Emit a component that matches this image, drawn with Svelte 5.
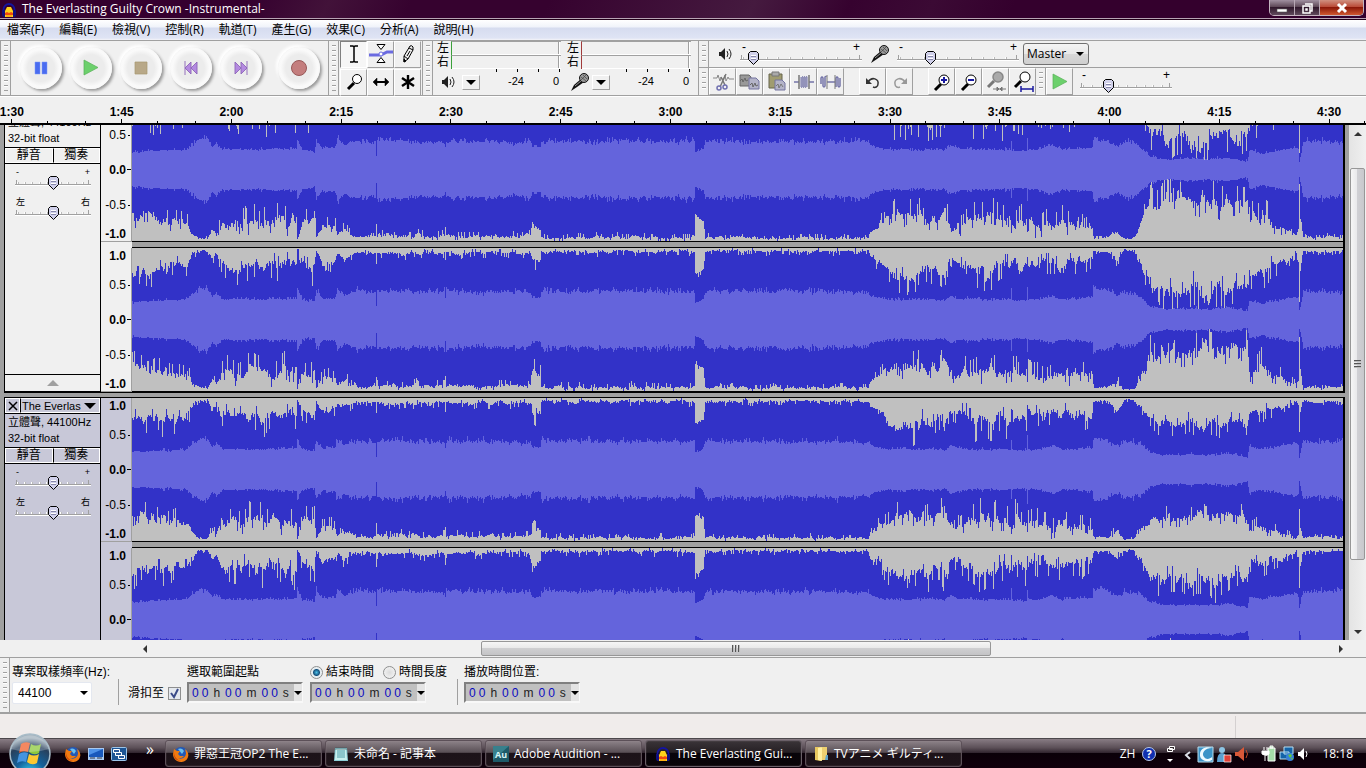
<script>
  const menus = ['檔案(F)', '編輯(E)', '檢視(V)', '控制(R)', '軌道(T)', '產生(G)', '效果(C)', '分析(A)', '說明(H)'];
  const times = ['1:30', '1:45', '2:00', '2:15', '2:30', '2:45', '3:00', '3:15', '3:30', '3:45', '4:00', '4:15', '4:30'];
  const levels = ['1.0', '0.5', '0.0', '-0.5', '-1.0'];
  const transport = ['pause', 'play', 'stop', 'rewind', 'forward', 'record'];
  const tools = ['select', 'envelope', 'draw', 'zoom', 'shift', 'multi'];

  // column, headroom, jitter, rms half height
  const envelope = [
    [0, 14, 24, 17], [25, 13, 24, 19], [55, 10, 18, 20], [60, 4, 8, 26], [68, 1, 4, 30], [75, 1, 4, 30],
    [80, 8, 10, 22], [84, 5, 8, 26], [90, 10, 22, 20], [120, 8, 28, 20], [164, 8, 28, 21], [165, 1, 3, 30],
    [170, 8, 20, 20], [182, 12, 26, 18], [184, 2, 4, 29], [190, 10, 16, 21], [203, 6, 16, 22], [205, 4, 4, 31],
    [212, 5, 14, 24], [224, 3, 4, 28], [243, 2, 6, 27], [244, 13, 10, 13], [245, 3, 8, 29], [300, 2, 9, 27],
    [312, 2, 9, 27], [313, 11, 10, 21], [314, 2, 8, 28], [398, 2, 8, 27], [400, 9, 20, 22], [408, 8, 16, 22],
    [409, 1, 7, 28], [562, 1, 7, 28], [563, 24, 6, 17], [571, 18, 8, 20], [573, 1, 6, 28], [736, 1, 6, 27],
    [738, 7, 6, 24], [753, 13, 18, 20], [765, 15, 26, 20], [775, 20, 30, 20], [790, 14, 26, 20], [808, 13, 24, 20],
    [812, 22, 26, 18], [818, 6, 16, 24], [825, 8, 20, 21], [845, 11, 30, 20], [878, 10, 28, 20], [879, 6, 8, 30],
    [880, 9, 26, 19], [894, 8, 28, 19], [895, 5, 8, 31], [896, 8, 26, 20], [905, 8, 26, 20], [920, 6, 22, 24],
    [930, 8, 26, 20], [960, 8, 18, 22], [961, 2, 4, 31], [975, 2, 4, 29], [985, 6, 12, 23], [992, 1, 4, 27],
    [1002, 1, 3, 27], [1010, 14, 14, 20], [1018, 28, 24, 13], [1036, 28, 40, 10], [1055, 30, 34, 11],
    [1078, 28, 42, 10], [1095, 26, 34, 12], [1115, 32, 26, 8], [1117, 10, 26, 19], [1130, 14, 30, 16],
    [1150, 8, 16, 20], [1164, 3, 8, 22], [1166, 10, 5, 20], [1167, 52, 10, 7], [1168, 22, 5, 12], [1170, 5, 5, 22],
    [1171, 2, 5, 28], [1211, 2, 5, 28]
  ];

  function drawWave(seed, loud) {
    let state = seed;
    const rand = () => {
      state = (state * 1103515245 + 12345) % 2147483648;
      return state / 2147483648;
    };
    // slow swell with single-column spikes on top of it
    const noise = () => {
      let from = rand();
      let to = rand();
      let step = 0;
      let length = 4;
      return () => {
        if (++step > length) {
          from = to;
          to = rand() ** 1.5;
          step = 1;
          length = 2 + Math.floor(rand() * 5);
        }
        const swell = from + ((to - from) * step) / length;
        const spike = rand();
        return swell * 0.5 + spike * 0.35 + (spike > 0.88 ? 0.4 : 0) - (spike < 0.08 ? 0.2 : 0);
      };
    };
    const upper = noise();
    const lower = noise();
    const body = noise();
    let k = 0;
    let peakTop = '', peakBottom = '', rmsTop = '', rmsBottom = '';
    for (let x = 0; x < 1211; x++) {
      while (envelope[k + 1][0] <= x) k++;
      const a = envelope[k];
      const b = envelope[k + 1];
      const t = (x - a[0]) / (b[0] - a[0]);
      const mix = i => a[i] + (b[i] - a[i]) * t;
      const scale = x > 1005 && x < 1171 ? loud : 1;
      const top = Math.max(0, Math.round((mix(1) + mix(2) * upper()) * scale));
      const bottom = Math.max(0, Math.round((mix(1) + mix(2) * lower()) * scale));
      const wobble = mix(3) > 25 ? 5 : 3;
      const rms = Math.round(mix(3) + (scale < 1 ? 4 : 0) + (body() - 0.5) * wobble + (wobble > 4 ? rand() * 3 - 1 : 0));
      peakTop += `V${top}H${x + 1}`;
      peakBottom = `V${143 - bottom}H${x}` + peakBottom;
      rmsTop += `V${71 - rms}H${x + 1}`;
      rmsBottom = `V${72 + rms}H${x}` + rmsBottom;
    }
    return {
      peak: `M0 71${peakTop}${peakBottom}Z`,
      rms: `M0 71${rmsTop}${rmsBottom}Z`
    };
  }

  const tracks = [
    { name: '', levels: ['', ...levels.slice(1)], selected: false, waves: [drawWave(11, 1), drawWave(29, 1)] },
    { name: 'The Everlas', levels, selected: true, waves: [drawWave(47, 0.6), drawWave(83, 0.75)] }
  ];

  const tasks = [
    { icon: 'fox', text: '罪惡王冠OP2 The E...' },
    { icon: 'note', text: '未命名 - 記事本' },
    { icon: 'au', text: 'Adobe Audition - ...' },
    { icon: 'audacity', text: 'The Everlasting Gui...', active: true },
    { icon: 'folder', text: 'TVアニメ ギルティ...' }
  ];

  let rate = $state('44100');
  let snap = $state(true);
  let endMode = $state('end');
</script>

{#snippet appIcon(name)}
  <svg class="app-icon" viewBox="0 0 16 16" aria-hidden="true">
    {#if name === 'audacity'}
      <path d="M2.500 12V7.500a5.500 5.500 0 0 1 11 0V12" fill="none" stroke="#1414a0" stroke-width="1.800" />
      <path d="M1 8h3v7H2l-1-2zM15 8h-3v7h2l1-2z" fill="#10107c" />
      <path d="M6 5h4l2 4v6H4V9z" fill="#ffd21c" />
      <path d="M4 11l2-1 2 1 2-1 2 1v2H4z" fill="#f04a10" />
      <path d="M5 13h6v2H5z" fill="#ffb010" />
    {:else if name === 'fox'}
      <circle cx="8" cy="8" r="7" fill="#2458b4" />
      <path d="M5 3a5 5 0 0 1 6 2L9 8z" fill="#6ac0ee" />
      <path d="M1 3l3 2 3 0-2 3 2 2 4 0C9 13 5 12 5 12c4 2 8-1 8-5l-1-4c3 2 4 6 3 8-1 4-5 5-7 5-5 0-8-4-8-8z" fill="#f07a10" />
      <path d="M1 6c0 5 3 8 7 9-5 0-8-4-7-9z" fill="#c83c08" />
    {:else if name === 'note'}
      <path d="M2 2h12l1 13H1z" fill="#8ed0d8" />
      <path d="M3 3h10l1 11H2z" fill="#c8f0ee" />
      <path d="M4 5h8M4 7h8M4 9h8M4 11h8" stroke="#4e9ca8" />
      <path d="M3 1v3M5 1v3M7 1v3M9 1v3M11 1v3M13 1v3" stroke="#40585c" stroke-width=".7" />
    {:else if name === 'au'}
      <rect width="16" height="16" fill="#1e5a68" />
      <path d="M0 0h16L0 14z" fill="#38808c" />
      <text x="8" y="12" text-anchor="middle" font-size="9" font-weight="bold" fill="#d6f4f6">Au</text>
    {:else if name === 'folder'}
      <path d="M2 1h6v14l-6-1z" fill="#e8c860" />
      <path d="M5 2l4-1v14l-4-1z" fill="#fff0a0" />
      <path d="M9 1h5v13H9z" fill="#edd070" />
      <path d="M13 9h2v5h-3z" fill="#60a4c8" />
    {:else if name === 'desktop'}
      <rect x="0" y="2" width="16" height="12" fill="#a8c8f0" />
      <path d="M1 3h14v8H1z" fill="#1858bc" />
      <path d="M1 3h14L1 9z" fill="#4e92e8" />
      <path d="M2 12h5M9 12h5" stroke="#303848" />
    {:else if name === 'windows'}
      <rect x=".5" y="1.500" width="15" height="13" rx="1" fill="#1c5494" stroke="#9cc4e8" />
      <path d="M2.500 3.500h6v3h-6zM4.500 6.500h6v3h-6zM7.500 9.500h6v3h-6z" fill="#2c5c9c" stroke="#fff" />
    {/if}
  </svg>
{/snippet}

{#snippet transportIcon(name)}
  <svg width="18" height="18" viewBox="0 0 18 18" aria-hidden="true">
    {#if name === 'pause'}
      <path d="M3 3h5v12H3zM10 3h5v12h-5z" fill="#4a6cf0" stroke="#7c9af8" stroke-width=".5" />
    {:else if name === 'play'}
      <path d="M2 1v15l14-7.500z" fill="#6cd06c" stroke="#58b058" stroke-width=".7" />
    {:else if name === 'stop'}
      <path d="M3 3h12v12H3z" fill="#b8a888" stroke="#a89870" stroke-width=".7" />
    {:else if name === 'rewind'}
      <path d="M3 2v14M9 3v12l-6-6zM15 3v12L9 9z" fill="#b48ae0" stroke="#8c64b8" stroke-width=".9" />
    {:else if name === 'forward'}
      <path d="M15 2v14M9 3v12l6-6zM3 3v12l6-6z" fill="#b48ae0" stroke="#8c64b8" stroke-width=".9" />
    {:else}
      <circle cx="9" cy="9" r="7.500" fill="#c47e7e" stroke="#985858" />
    {/if}
  </svg>
{/snippet}

{#snippet toolIcon(name)}
  <svg width="24" height="24" viewBox="0 0 24 24" fill="none" stroke="#000" stroke-width="1.500" aria-hidden="true">
    {#if name === 'select'}
      <path d="M8 4h3l1 1 1-1h3M12 5v14M8 20h3l1-1 1 1h3" />
    {:else if name === 'envelope'}
      <path d="M0 13h12l6-3h6" stroke="#6a6ae0" stroke-width="3" />
      <path d="M8 2.500h8l-4 5zM8 20.500h8l-4-5z" fill="#fff" stroke-width="1" />
      <circle cx="12" cy="12" r="2" fill="#fff" stroke="#6a6ae0" stroke-width="1" />
    {:else if name === 'draw'}
      <path d="M8 14l6-10q2-1 3 1v3l-5 9-4 3zM8 14l4 3M13 6l4 2M14 9l-3 5" stroke-width="1" />
      <path d="M8 17v3l2-1z" fill="#000" stroke-width="1" />
    {:else if name === 'shift'}
      <path d="M5 12h14" stroke-width="2" />
      <path d="M8 8l-4 4 4 4zM16 8l4 4-4 4z" fill="#000" stroke-width=".5" />
    {:else if name === 'multi'}
      <path d="M12 5v14M6 8l12 8M18 8L6 16" stroke-width="2.400" />
    {:else if name === 'zoom'}
      <path d="M12 13l-6 6" stroke-width="3" />
      <circle cx="15" cy="9" r="4.500" fill="#fff" stroke-width="1" />
    {:else if name === 'cut'}
      <path d="M2 8h4l1-3 2 6 1-4 2 3 2-5 1 6 2-4 1 2h5" stroke="#888" stroke-width="1" />
      <path d="M15 4l-6 13M10 7l4 8" stroke="#777" />
      <circle cx="8" cy="18" r="2" stroke="#7070b0" /><circle cx="14" cy="17" r="2" stroke="#7070b0" />
    {:else if name === 'copy'}
      <path d="M2 5h9l2 2v9H2z" fill="#999" stroke="#666" stroke-width="1" />
      <path d="M11 8h7l3 3v8H11z" fill="#b4b4c8" stroke="#7474a0" stroke-width="1" />
      <path d="M2 11l2-2 1 3 2-4 1 3 2-1M12 15l2-2 1 4 2-4 1 3 2-1" stroke="#666" stroke-width="1" />
    {:else if name === 'paste'}
      <path d="M4 4h13v14H4z" fill="#a09c70" stroke="#66644c" stroke-width="1" />
      <path d="M7 2h7v4H7z" fill="#aaa" stroke="#777" stroke-width="1" />
      <path d="M10 10h7l3 3v7H10z" fill="#b4b4c8" stroke="#7474a0" stroke-width="1" />
      <path d="M11 16l2-2 1 4 2-4 2 3" stroke="#777" stroke-width="1" />
    {:else if name === 'trim'}
      <path d="M2 12h5M17 12h5" stroke="#7474a8" />
      <path d="M7 5v14M17 5v14" stroke="#777" />
      <path d="M9 7v10q1 1 1 0V7q1-1 1 0v10q1 1 1 0V7q1-1 1 0v10q1 1 1 0V7q1-1 1 0v10" stroke="#7474a8" stroke-width="1" />
    {:else if name === 'silence'}
      <path d="M2 14V8q1-2 2 0v8q1 2 2 0V7q1-1 1 0M8 12h8M17 17V8q1-2 2 0v8q1 2 2 0V8" stroke="#7474a8" />
      <path d="M8 5v14M16 5v14" stroke="#777" stroke-width="1" />
    {:else if name === 'undo'}
      <path d="M7 12c4-6 11-3 10 2 0 3-3 4-5 3" stroke="#333" />
      <path d="M5 8v6h6z" fill="#333" stroke="none" />
    {:else if name === 'redo'}
      <path d="M17 12c-4-6-11-3-10 2 0 3 3 4 5 3" stroke="#999" />
      <path d="M19 8v6h-6z" fill="#999" stroke="none" />
    {:else if name === 'zoomin' || name === 'zoomout'}
      <path d="M11 14l-6 6" stroke-width="3" />
      <circle cx="14" cy="10" r="5" fill="#fff" stroke-width="1" />
      <path d={name === 'zoomin' ? 'M11 10h6M14 7v6' : 'M11 10h6'} stroke="#1818a0" stroke-width="2" />
    {:else if name === 'zoomsel'}
      <path d="M10 11l-6 6" stroke="#777" stroke-width="3" />
      <circle cx="14" cy="7" r="5" fill="#aaa" stroke="#888" />
      <path d="M9 19h13M13 17l2 2-2 2zM18 17l-2 2 2 2z" fill="#777" stroke="#777" stroke-width="1" />
    {:else if name === 'zoomfit'}
      <path d="M10 11l-6 6" stroke-width="3" />
      <circle cx="14" cy="7" r="5" fill="#fff" stroke-width="1" />
      <path d="M10 19h12M10 16v6M22 16v6" stroke="#1818a0" />
    {/if}
  </svg>
{/snippet}

{#snippet speaker()}
  <svg width="16" height="16" viewBox="0 0 16 16" aria-hidden="true">
    <path d="M2 6h2l4-4v12l-4-4H2z" fill="#222" />
    <path d="M10 5q2 3 0 6M12 3q4 5 0 10" fill="none" stroke="#222" />
  </svg>
{/snippet}

{#snippet mic()}
  <svg width="20" height="20" viewBox="0 0 20 20" aria-hidden="true">
    <path d="M1 19l3-6 7-6 3 3-7 5z" fill="#111" />
    <path d="M5 14l6-5" stroke="#999" />
    <circle cx="14" cy="6" r="4.500" fill="#999" stroke="#111" />
    <path d="M11 5l5 4M13 3l4 4M11 8l5-5" stroke="#444" stroke-width=".7" />
  </svg>
{/snippet}

{#snippet slider(label, value, low, high, size)}
  <label class="slider {size}">
    <span class="ends"><span>{low}</span><span>{high}</span></span>
    <input type="range" min="0" max="100" {value} aria-label={label} />
  </label>
{/snippet}

{#snippet meter(color)}
  <div class="meter">
    <div class="bars {color}">
      <span>左</span><div class="bar"></div>
      <span>右</span><div class="bar"></div>
    </div>
    <div class="meter-foot">
      <span class="source">{#if color === 'green'}{@render speaker()}{:else}{@render mic()}{/if}</span>
      <button class="drop" aria-label="Meter options"><i class="tri"></i></button>
      <div class="scale"><span>-24</span><span>0</span></div>
    </div>
  </div>
{/snippet}

{#snippet timeBox(label)}
  <div class="time" role="group" aria-label={label}>
    <span><b>0</b><b>0</b></span> h <span><b>0</b><b>0</b></span> m <span><b>0</b><b>0</b></span> s
    <button aria-label="Time format"><i class="tri"></i></button>
  </div>
{/snippet}

<div class="window">
  <header class="titlebar">
    {@render appIcon('audacity')}
    <h1>The Everlasting Guilty Crown -Instrumental-</h1>
    <div class="controls">
      <button aria-label="Minimize"><svg width="12" height="12" viewBox="0 0 12 12"><path d="M1 7h10v3H1z" fill="#fff" stroke="#555" stroke-width=".6" /></svg></button>
      <button aria-label="Restore"><svg width="12" height="12" viewBox="0 0 12 12"><path d="M4 2h7v7H9M2 4h7v7H2zM5 7h1v1H5z" fill="none" stroke="#fff" stroke-width="1.500" /></svg></button>
      <button class="close" aria-label="Close"><svg width="12" height="12" viewBox="0 0 12 12"><path d="M2 2l8 8M10 2l-8 8" stroke="#fff" stroke-width="3" /></svg></button>
    </div>
  </header>

  <nav class="menubar">
    {#each menus as item}<button>{item}</button>{/each}
  </nav>

  <div class="toolbars">
    <div class="toolbar transport">
      <i class="grip"></i>
      {#each transport as name}
        <button class={name} aria-label={name}>{@render transportIcon(name)}</button>
      {/each}
    </div>
    <div class="toolbar">
      <i class="grip"></i>
      <div class="tools">
        {#each tools as name, i}
          <button class="tile" class:pressed={i === 0} aria-label={name}>{@render toolIcon(name)}</button>
        {/each}
      </div>
    </div>
    <div class="toolbar meters">
      <i class="grip"></i>
      {@render meter('green')}
      {@render meter('red')}
    </div>
    <div class="stack">
      <div class="toolbar mixer">
        <i class="grip"></i>
        {@render speaker()}
        {@render slider('Output volume', 7, '-', '+', 'wide')}
        {@render mic()}
        {@render slider('Input volume', 25, '-', '+', 'wide')}
        <select aria-label="Input source"><option>Master</option></select>
      </div>
      <div class="toolbar edit">
        <i class="grip"></i>
        {#each ['cut', 'copy', 'paste', 'trim', 'silence'] as name}
          <button class="tile" aria-label={name}>{@render toolIcon(name)}</button>
        {/each}
        <i class="gap"></i>
        {#each ['undo', 'redo'] as name}
          <button class="tile" aria-label={name}>{@render toolIcon(name)}</button>
        {/each}
        <i class="gap"></i>
        {#each ['zoomin', 'zoomout', 'zoomsel', 'zoomfit'] as name}
          <button class="tile" aria-label={name}>{@render toolIcon(name)}</button>
        {/each}
        <i class="grip"></i>
        <button class="tile" aria-label="Play at speed">{@render transportIcon('play')}</button>
        {@render slider('Playback speed', 29, '-', '+', 'mid')}
      </div>
    </div>
  </div>

  <div class="ruler">
    {#each times as time}<span>{time}</span>{/each}
  </div>

  <main class="workspace">
    <div class="viewport">
      {#each tracks as track}
        <section class="track" class:selected={track.selected}>
          <div class="panel">
            <div class="name">
              <button aria-label="Close track">
                <svg width="10" height="10" viewBox="0 0 10 10"><path d="M1 1l8 8M9 1L1 9" stroke="#000" stroke-width="1.500" /></svg>
              </button>
              <button class="title" aria-label="Track menu">{track.name}<i class="tri"></i></button>
            </div>
            <p>立體聲, 44100Hz<br />32-bit float</p>
            <div class="mute"><button>靜音</button><button>獨奏</button></div>
            <div class="knobs">
              {@render slider('Gain', 50, '-', '+', 'small')}
              {@render slider('Pan', 50, '左', '右', 'small')}
            </div>
            <button class="collapse" aria-label="Collapse"><i></i></button>
          </div>
          <div class="channels">
            {#each track.waves as wave, i}
              <div class="channel">
                <div class="levels">
                  {#each i ? levels : track.levels as level}<span class:strong={!level.includes('0.5')}>{level}</span>{/each}
                </div>
                <svg viewBox="0 0 1211 143" preserveAspectRatio="none" shape-rendering="crispEdges" aria-hidden="true">
                  <path d={wave.peak} fill="#3232c8" />
                  <path d={wave.rms} fill="#6464dc" />
                </svg>
              </div>
            {/each}
          </div>
        </section>
      {/each}
    </div>
    <div class="vscroll">
      <button aria-label="Scroll up"><i class="up"></i></button>
      <div class="thumb"><i></i></div>
      <button aria-label="Scroll down"><i class="down"></i></button>
    </div>
  </main>

  <div class="hscroll">
    <button aria-label="Scroll left"><i class="left"></i></button>
    <div class="thumb"><i></i></div>
    <button aria-label="Scroll right"><i class="right"></i></button>
  </div>

  <div class="selection">
    <i class="grip"></i>
    <div class="field rate">
      <label for="rate">專案取樣頻率(Hz):</label>
      <select id="rate" bind:value={rate}><option>44100</option><option>48000</option></select>
    </div>
    <i class="rule"></i>
    <label class="snap">滑扣至<input type="checkbox" bind:checked={snap} /></label>
    <div class="field">
      <span>選取範圍起點</span>
      {@render timeBox('選取範圍起點')}
    </div>
    <div class="field">
      <div class="radios">
        <label><input type="radio" value="end" bind:group={endMode} />結束時間</label>
        <label><input type="radio" value="length" bind:group={endMode} />時間長度</label>
      </div>
      {@render timeBox('結束時間')}
    </div>
    <i class="rule last"></i>
    <div class="field">
      <span>播放時間位置:</span>
      {@render timeBox('播放時間位置')}
    </div>
  </div>

  <div class="status"><span></span><span></span></div>

  <footer class="taskbar">
    <button class="start" aria-label="Start">
      <svg width="46" height="46" viewBox="0 0 46 46">
        <defs>
          <radialGradient id="orb" cx=".5" cy="1" r=".9">
            <stop offset="0" stop-color="#38d8f4" /><stop offset=".4" stop-color="#14629c" />
            <stop offset=".8" stop-color="#28405c" /><stop offset="1" stop-color="#a0b0bc" />
          </radialGradient>
        </defs>
        <circle cx="23" cy="23" r="20" fill="url(#orb)" stroke="#a8bcc8" stroke-width="1.500" />
        <path d="M14 13q4-3 9-1l-2 9q-5-2-9 1z" fill="#f0602c" />
        <path d="M24 13q5 3 10 0l-2 9q-5 3-10-1z" fill="#8cc83c" />
        <path d="M12 23q4-3 9-1l-2 9q-5-2-9 1z" fill="#4494e0" />
        <path d="M22 23q5 3 10 0l-2 9q-5 3-10-1z" fill="#fcc830" />
        <path d="M4 18a20 20 0 0 1 38 0Q23 24 4 18z" fill="#fff" opacity=".25" />
      </svg>
    </button>
    <div class="quick">
      {@render appIcon('fox')}{@render appIcon('desktop')}{@render appIcon('windows')}
      <span>»</span>
    </div>
    <div class="tasks">
      {#each tasks as task}
        <button class:active={task.active}>{@render appIcon(task.icon)}<span>{task.text}</span></button>
      {/each}
    </div>
    <div class="tray">
      <span>ZH</span>
      <svg width="115" height="20" viewBox="0 0 115 20" aria-hidden="true">
        <circle cx="9" cy="10" r="6.500" fill="#1030b0" stroke="#b8c8e8" />
        <text x="9" y="14" text-anchor="middle" font-size="11" font-weight="bold" fill="#fff">?</text>
        <path d="M29.500 2.500h5v3h-5zM27.500 4.500h5v3h-5z" fill="#332c30" stroke="#fff" />
        <path d="M27 15h6l-3 3z" fill="#fff" />
        <path d="M50 8l-4 3 4 4" fill="none" stroke="#dce0e8" stroke-width="2" />
        <path d="M58 3h15v15H58z" fill="#3c94c8" stroke="#b8dcec" />
        <path d="M72 4c-7 0-11 5-8 9 2 3 6 2 8 0l0 3c-5 3-13 0-12-6 0-5 6-8 12-6z" fill="#eefaff" />
        <circle cx="82" cy="6" r="3" fill="#8cc4e4" />
        <path d="M77 18q0-9 5-9t5 9z" fill="#5ca0d0" />
        <path d="M84 11h7v7h-7z" fill="#e04038" stroke="#fff" stroke-width=".7" />
        <path d="M95 8h3l6-5v14l-6-5h-3z" fill="#d85838" />
        <path d="M106 6q3 4 0 8" fill="none" stroke="#c04828" />
      </svg>
      <svg width="52" height="20" viewBox="0 0 52 20" aria-hidden="true">
        <path d="M8 4h7v13H8zM10 2h3v2h-3z" fill="#a4dca8" stroke="#fff" />
        <path d="M2 7h7v3q-3 3-7 0zM4 3v3M7 3v3M5 12v5" fill="#fff" stroke="#fff" />
        <path d="M24 3h9v7h-9zM20 8h9v7h-9z" fill="#1464a8" stroke="#b8e0f4" />
        <circle cx="30" cy="13" r="4" fill="#3880d8" />
        <path d="M28 11l3-1 1 2-2 2zM31 14l2 0-1 2z" fill="#64c83c" />
        <path d="M38 8h2l4-4v12l-4-4h-2z" fill="#fff" />
        <path d="M46 7q2 3 0 6" fill="none" stroke="#fff" />
      </svg>
      <time>18:18</time>
    </div>
  </footer>
</div>

<style>
  :global(body) {
    background: #f0f0f0;
  }

  .window {
    display: flex;
    flex-direction: column;
    height: 100vh;
    overflow: hidden;
    font: 12px/16px "Open Sans", "Noto Sans CJK TC", sans-serif;
    color: #000;
    background: #f0f0f0;
  }

  .window :is(button, input, select) {
    margin: 0;
    font: inherit;
    color: inherit;
    box-sizing: border-box;
  }

  button {
    padding: 0;
    border: 0;
    background: none;
  }

  svg {
    flex: none;
    display: block;
  }

  .app-icon {
    width: 16px;
    height: 16px;
  }

  .tri {
    display: block;
    border: 5px solid transparent;
    border-top-color: #000;
    border-bottom: 0;
  }

  .titlebar {
    display: flex;
    align-items: center;
    height: 18px;
    border-bottom: 1px solid #b8a4b4;
    background: linear-gradient(115deg, #35002f 18%, #421239 24%, #36022f 30%, #36022f 40%, #451a3f 55%, #36022f 62%, #3b0a34 68%, #34002d 74%);
    color: #fff;
  }

  .titlebar .app-icon {
    margin: 2px 5px 0 1px;
  }

  h1 {
    flex: 1;
    margin: 0;
    font-size: 12px;
    font-weight: 400;
  }

  .controls {
    display: flex;
    align-self: flex-start;
    margin-right: 2px;
    border: 1px solid #c4b4c0;
    border-top: 0;
    border-radius: 0 0 5px 5px;
    overflow: hidden;
  }

  .controls button {
    display: grid;
    place-items: center;
    width: 25px;
    height: 15px;
    border-right: 1px solid #b8a8b4;
    background: linear-gradient(#a090a0, #56404f 50%, #30182c 50%, #604a5c);
  }

  .controls .close {
    width: 43px;
    border: 0;
    background: linear-gradient(#d09080, #b84430 50%, #8c1808 50%, #d05830);
  }

  .menubar {
    display: flex;
    height: 20px;
    border-top: 1px solid #200018;
    background: linear-gradient(#fff, #f0f3fa 35%, #d6dcef 40%, #dfe4f4 90%, #f4f4f8);
  }

  .menubar button {
    padding: 0 8px 0 7px;
  }

  .toolbars {
    display: flex;
    height: 57px;
    border-bottom: 1px solid #fff;
    box-sizing: border-box;
    background: #f0f0f0;
  }

  .toolbar {
    display: flex;
    align-items: center;
    border: 1px solid #a0a0a0;
    border-width: 1px 0 1px 1px;
  }

  .grip {
    align-self: stretch;
    flex: none;
    width: 9px;
    border-right: 1px solid #a0a0a0;
    background: repeating-linear-gradient(#a0a0a0 0 1px, #fff 1px 2px, transparent 2px 5px) 3px 4px / 4px calc(100% - 8px) no-repeat;
  }

  .transport {
    padding-right: 4px;
  }

  .transport button {
    display: grid;
    place-items: center;
    width: 42px;
    height: 42px;
    margin: 0 4px;
    border-radius: 50%;
    background: radial-gradient(#ececec 45%, #fafafa 62%, #f4f4f4);
    box-shadow: 2px 2px 3px #999, -2px -2px 3px #fff;
  }

  .transport .pause {
    margin-left: 9px;
  }

  .transport .record {
    margin-left: 12px;
  }

  .tools {
    display: grid;
    grid-template-columns: repeat(3, 27px);
    row-gap: 1px;
    padding: 0 1px;
  }

  .tile {
    display: grid;
    place-items: center;
    width: 27px;
    height: 27px;
    border: 1px solid;
    border-color: #fff #a0a0a0 #a0a0a0 #fff;
  }

  .tile.pressed {
    border-color: #808080 #fff #fff #808080;
    background: #f6f6f6;
  }

  .meters {
    gap: 4px;
    padding-right: 5px;
  }

  .meter {
    width: 126px;
    font-family: "Liberation Sans", "Noto Sans CJK TC", sans-serif;
  }

  .bars {
    display: grid;
    grid-template-columns: 13px 1fr;
    grid-auto-rows: 14px;
    column-gap: 1px;
    line-height: 14px;
  }

  .bar {
    margin-right: 2px;
    border: 1px solid #a0a0a0;
    border-width: 1px 0 0 1px;
    background: linear-gradient(90deg, #a0a0a0 50%, #fff 50%) right 1px top / 2px 100% no-repeat;
    box-shadow: inset 0 -1px #fff;
  }

  .green .bar {
    border-left-color: #3aa03a;
  }

  .red .bar {
    border-left-color: #a03a3a;
  }

  .meter-foot {
    display: flex;
    align-items: center;
    height: 26px;
    padding-left: 3px;
  }

  .source {
    width: 20px;
  }

  .meter-foot .drop {
    display: grid;
    place-items: center;
    width: 18px;
    height: 15px;
    margin-left: 2px;
    border: 1px solid;
    border-color: #fff #a0a0a0 #a0a0a0 #fff;
  }

  .scale {
    display: flex;
    flex: 1;
    align-self: stretch;
    justify-content: space-between;
    padding: 4px 4px 0 28px;
    font-size: 11px;
    background: repeating-linear-gradient(90deg, #000 0 1px, transparent 1px 21px) right 3px top / 85px 3px no-repeat;
  }

  .stack {
    display: flex;
    flex: 1;
    flex-direction: column;
  }

  .stack .toolbar {
    height: 27px;
  }

  .stack .edit {
    border-top: 0;
  }

  .mixer svg {
    margin-left: 8px;
  }

  .mixer select {
    appearance: none;
    width: 66px;
    height: 22px;
    margin-left: 4px;
    padding: 0 3px;
    border: 1px solid #707070;
    border-radius: 3px;
    background:
      url("data:image/svg+xml,%3Csvg xmlns='http://www.w3.org/2000/svg' width='8' height='4'%3E%3Cpath d='M0 0h8L4 4z'/%3E%3C/svg%3E") right 4px center no-repeat,
      linear-gradient(#f4f4f4, #e8e8e8 50%, #d8d8d8 50%, #cfcfcf);
  }

  .gap {
    width: 15px;
  }

  .slider {
    display: flex;
    flex-direction: column;
    width: 122px;
    margin-left: 7px;
    font-family: "Liberation Sans", "Noto Sans CJK TC", sans-serif;
  }

  .slider.mid {
    width: 92px;
  }

  .slider.small {
    width: 76px;
    margin: 0;
  }

  .ends {
    display: flex;
    justify-content: space-between;
    padding: 0 2px;
    line-height: 8px;
  }

  .small .ends {
    padding: 0 1px;
    font-size: 9px;
  }

  .slider input {
    appearance: none;
    width: 100%;
    height: 14px;
    background:
      linear-gradient(#a0a0a0, #a0a0a0) 0 8px / 100% 1px no-repeat,
      linear-gradient(#fff, #fff) 0 9px / 100% 1px no-repeat,
      linear-gradient(#a0a0a0, #a0a0a0) 1px 4px / 1px 4px no-repeat,
      linear-gradient(#a0a0a0, #a0a0a0) calc(100% - 2px) 4px / 1px 4px no-repeat,
      repeating-linear-gradient(90deg, #fff 0 1px, #bbb 1px 2px, transparent 2px 10%) 2px 6px / calc(100% - 4px) 2px no-repeat;
  }

  .slider input::-webkit-slider-thumb {
    appearance: none;
    width: 11px;
    height: 14px;
    background: url("data:image/svg+xml,%3Csvg xmlns='http://www.w3.org/2000/svg' width='11' height='14'%3E%3Cpath d='M2.500.5h6l2 2v6l-5 5-5-5v-6z' fill='%23d0d0ea' stroke='%23000'/%3E%3Cpath d='M3 4.500h5M3 7.500h5' stroke='%23fff'/%3E%3Cpath d='M3 5.500h5M3 8.500h5' stroke='%238888aa'/%3E%3C/svg%3E");
  }

  .ruler {
    display: flex;
    height: 26px;
    border-bottom: 2px solid #000;
    overflow: hidden;
    font: bold 12px/30px "Liberation Sans", sans-serif;
    text-align: center;
  }

  .ruler span {
    flex: 1;
    background:
      linear-gradient(#000, #000) 50% 100% / 1px 4px no-repeat,
      linear-gradient(#000, #000) 17% 100% / 1px 2px no-repeat,
      linear-gradient(#000, #000) 83% 100% / 1px 2px no-repeat;
  }

  .ruler span:first-child {
    margin-left: -43px;
  }

  .ruler span:last-child {
    margin-right: -18px;
  }

  .workspace {
    display: flex;
    flex: 1;
    min-height: 0;
  }

  /* scrolled a little way into the first track */
  .viewport {
    flex: 1;
    min-width: 0;
    padding: 0 4px;
    overflow: hidden;
    background: #a0a0a0;
  }

  .track {
    display: flex;
    height: 293px;
    margin-bottom: 4px;
    border: 1px solid #000;
    border-width: 1px 2px 2px 1px;
    background: #f0f0f0;
  }

  .track:first-child {
    margin-top: -28px;
  }

  .selected {
    background: #c8c8d8;
  }

  .panel {
    display: flex;
    flex-direction: column;
    width: 95px;
    border-right: 1px solid #000;
    font: 11px/16px "Liberation Sans", "Noto Sans CJK TC", sans-serif;
  }

  .name,
  .mute {
    display: flex;
    height: 15px;
    border-bottom: 1px solid #000;
  }

  .name button {
    display: grid;
    place-items: center;
    width: 15px;
    border: 1px solid #fff;
  }

  .name .title {
    display: flex;
    flex: 1;
    justify-content: space-between;
    padding: 0 3px 0 1px;
    border-left-color: #000;
  }

  .title .tri {
    border-width: 6px;
    border-bottom: 0;
  }

  .panel p {
    height: 33px;
    margin: 0;
    padding-left: 3px;
    border-bottom: 1px solid #000;
    white-space: nowrap;
  }

  .mute button {
    flex: 1;
    border: 1px solid #fff;
    font-size: 12px;
    line-height: 13px;
  }

  .mute button + button {
    border-left-color: #000;
  }

  .knobs {
    display: flex;
    flex: 1;
    flex-direction: column;
    gap: 8px;
    padding: 4px 0 0 10px;
  }

  .collapse {
    display: grid;
    place-items: center;
    height: 17px;
    border-top: 1px solid #000;
  }

  .collapse i {
    border: 6px solid transparent;
    border-top: 0;
    border-bottom-color: #a0a0a0;
  }

  .channels {
    display: flex;
    flex: 1;
    flex-direction: column;
    justify-content: space-between;
    min-width: 0;
    background: linear-gradient(#000 1px, #a0a0a0 1px 6px, #000 6px) 31px 143px / 100% 7px no-repeat;
  }

  .channel {
    display: flex;
    height: 143px;
  }

  .channel svg {
    flex: 1;
    width: 0;
    height: 143px;
    background: #c0c0c0;
  }

  .levels {
    display: grid;
    grid-template-rows: 16px 42px 27px 44px 14px;
    align-items: center;
    width: 30px;
    border-right: 1px solid #a0a0a0;
    box-shadow: 0 1px #a0a0a0;
    font: 12px/14px "Liberation Sans", sans-serif;
    text-align: right;
  }

  .levels span {
    padding-right: 5px;
    background: linear-gradient(#000, #000) right 1px center / 2px 1px no-repeat;
  }

  .levels .strong {
    font-weight: bold;
    background: none;
  }

  .levels span:nth-child(3) {
    background: linear-gradient(#000, #000) right center / 4px 1px no-repeat;
  }

  .vscroll {
    display: flex;
    flex-direction: column;
    width: 17px;
    background: linear-gradient(90deg, #e4e4e4, #f0f0f0);
  }

  .vscroll button,
  .hscroll button {
    display: grid;
    place-items: center;
    width: 17px;
    height: 17px;
  }

  .up,
  .down,
  .left,
  .right {
    border: 4px solid transparent;
  }

  .up {
    border-top: 0;
    border-bottom-color: #333;
  }

  .down {
    border-bottom: 0;
    border-top-color: #333;
  }

  .left {
    border-left: 0;
    border-right-color: #333;
  }

  .right {
    border-right: 0;
    border-left-color: #333;
  }

  .thumb {
    display: grid;
    place-items: center;
    border: 1px solid #979797;
    border-radius: 2px;
  }

  .vscroll .thumb {
    flex: 391;
    margin: 26px 1px 0;
    background: linear-gradient(90deg, #f6f6f6, #e8e8ea 50%, #d0d0d4 50%, #c8c8cc);
  }

  .vscroll button:last-child {
    flex: 74;
    align-items: end;
    padding-bottom: 6px;
  }

  .vscroll .thumb i {
    width: 7px;
    height: 8px;
    background: repeating-linear-gradient(#555 0 1px, #bbb 1px 2px, transparent 2px 3px);
  }

  .hscroll {
    display: flex;
    align-items: center;
    height: 17px;
    padding: 0 17px 0 136px;
    border-bottom: 1px solid #a0a0a0;
    background: #f0f0f0;
  }

  .hscroll .thumb {
    flex: 506;
    height: 13px;
    margin-left: 27%;
    background: linear-gradient(#f6f6f6, #e8e8e8 50%, #cfcfd1 50%, #c4c4c6);
  }

  .hscroll .thumb i {
    width: 8px;
    height: 7px;
    background: repeating-linear-gradient(90deg, #555 0 1px, #bbb 1px 2px, transparent 2px 3px);
  }

  .hscroll button:last-child {
    flex: 350;
    justify-items: end;
    padding-right: 6px;
  }

  .selection {
    display: flex;
    height: 54px;
    border-bottom: 2px solid #a0a0a0;
    font-family: "Liberation Sans", "Noto Sans CJK TC", sans-serif;
  }

  .field {
    display: flex;
    flex-direction: column;
    gap: 2px;
    margin-right: 7px;
    padding-top: 6px;
    white-space: nowrap;
  }

  .rate {
    width: 99px;
    margin-left: 2px;
  }

  .rate select {
    appearance: none;
    width: 80px;
    height: 22px;
    padding: 0 5px;
    border: 1px solid #e4e8f0;
    border-radius: 2px;
    background: #fff url("data:image/svg+xml,%3Csvg xmlns='http://www.w3.org/2000/svg' width='8' height='4'%3E%3Cpath d='M0 0h8L4 4z'/%3E%3C/svg%3E") right 3px center no-repeat;
  }

  .rule {
    align-self: flex-end;
    width: 1px;
    height: 26px;
    margin: 0 9px 7px 0;
    background: #a0a0a0;
  }

  .rule.last {
    margin: 0 6px 7px 3px;
  }

  .snap {
    display: flex;
    align-items: center;
    gap: 4px;
    align-self: flex-end;
    height: 16px;
    margin: 0 6px 11px 0;
  }

  .snap input {
    appearance: none;
    width: 13px;
    height: 13px;
    border: 1px solid #8e8f8f;
    background: #e4e8ee;
  }

  .snap input:checked {
    background: #e4e8ee url("data:image/svg+xml,%3Csvg xmlns='http://www.w3.org/2000/svg' width='11' height='11'%3E%3Cpath d='M2 5l3 4 4-8' fill='none' stroke='%233a4a88' stroke-width='2'/%3E%3C/svg%3E") center no-repeat;
  }

  .radios {
    display: flex;
    gap: 9px;
    height: 16px;
  }

  .radios label {
    display: flex;
    align-items: center;
    gap: 3px;
  }

  .radios input {
    appearance: none;
    width: 13px;
    height: 13px;
    border: 1px solid #8e8f8f;
    border-radius: 50%;
    background: radial-gradient(#dcdcdc, #f8f8f8);
  }

  .radios input:checked {
    background: radial-gradient(#4cc0e8, #14507c 3px, #e4ecf0 4px, #f8f8f8);
  }

  .time {
    display: flex;
    align-items: center;
    gap: 5px;
    width: 116px;
    height: 21px;
    box-sizing: border-box;
    padding-left: 3px;
    border: 2px solid;
    border-color: #808080 #f8f8f8 #f8f8f8 #808080;
    background: #c0c0c0;
    color: #222;
  }

  /* the two digits of a pair each sit in a cell of their own */
  .time span {
    display: flex;
    gap: 3px;
    color: #0a0ac0;
  }

  .time b {
    font-weight: 400;
  }

  .time button {
    display: grid;
    align-items: center;
    justify-content: center;
    align-self: stretch;
    width: 9px;
    margin-left: auto;
    background: #e4e4e4;
  }

  .time .tri {
    border-width: 4px;
    border-bottom: 0;
  }

  .status {
    display: flex;
    gap: 1px;
    height: 22px;
    padding-top: 2px;
    background: #f0eceb;
  }

  .status span {
    flex: 130;
    border-left: 1px solid #d4d0d0;
  }

  .status span:first-child {
    flex: 1235;
    border: 0;
  }

  .taskbar {
    display: flex;
    align-items: center;
    height: 29px;
    border-top: 1px solid #4c484c;
    background: linear-gradient(#887c84, #5c5058 30%, #30242e 48%, #0a0008 50%, #10000c);
    color: #fff;
  }

  .taskbar .start {
    flex: none;
    width: 46px;
    height: 46px;
    margin-left: 7px;
  }

  .quick {
    display: flex;
    flex: none;
    gap: 7px;
    width: 100px;
    padding-left: 12px;
  }

  .quick span {
    margin: -5px 0 0 12px;
    font-size: 16px;
  }

  .tasks {
    display: flex;
    flex: 1;
    gap: 3px;
    min-width: 0;
  }

  .tasks button {
    display: flex;
    align-items: center;
    gap: 5px;
    flex: 0 1 157px;
    min-width: 0;
    height: 27px;
    padding: 0 7px;
    border: 1px solid #5c5058;
    border-radius: 3px;
    background: linear-gradient(#8c8288, #5a5056 45%, #1c1218 50%, #1e141a);
    box-shadow: inset 0 0 1px #a09098;
    white-space: nowrap;
  }

  .tasks .active {
    padding-left: 9px;
    border-color: #6a6068;
    background: linear-gradient(#3a3438, #262024 45%, #08040a 50%, #0a0508);
  }

  .tray {
    display: flex;
    align-items: center;
    gap: 5px;
    padding-right: 13px;
  }

  .tray time {
    margin-left: 5px;
  }
</style>
